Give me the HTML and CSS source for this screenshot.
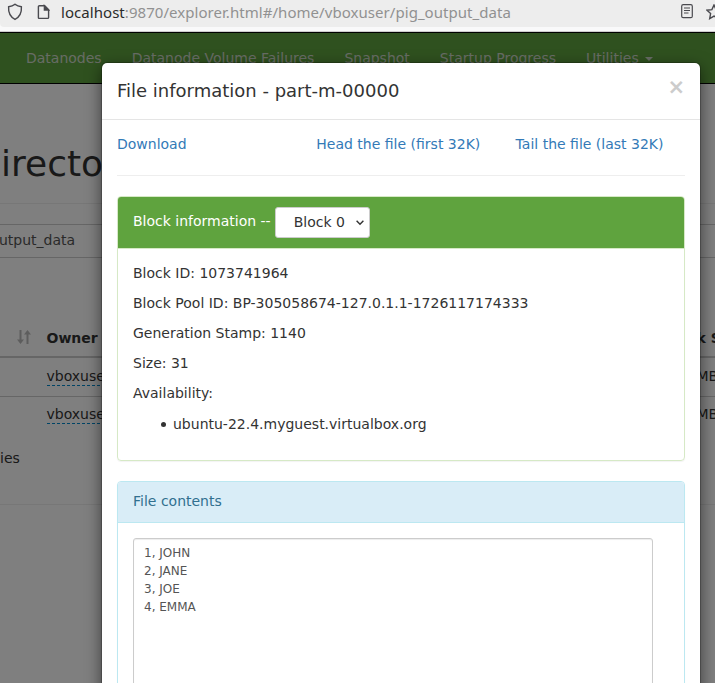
FILE: index.html
```html
<!DOCTYPE html>
<html lang="en">
<head>
<meta charset="utf-8">
<title>Browsing HDFS</title>
<link rel="stylesheet" href="styles.css">
</head>
<body>
<header class="chrome">
  <div class="address">
    <svg class="shield" width="16" height="18" viewBox="0 0 16 18"><path d="M8 1.200C6.300 2.600 3.800 3.500 1.600 3.800 1.200 9.600 3.400 14 8 16.400c4.600-2.400 6.800-6.800 6.400-12.600C12.200 3.500 9.700 2.600 8 1.200z"/></svg>
    <svg class="file" width="13" height="16" viewBox="0 0 13 16"><path d="M2.400 1.800h5.200l4 4v7.600q0 1-1 1H2.400q-1 0-1-1V2.800q0-1 1-1z"/><path class="fold" d="M7.400 1.800v4.300h4.200z"/></svg>
    <span class="url"><b>localhost</b>:9870/explorer.html#/home/vboxuser/pig_output_data</span>
    <svg class="reader" width="12" height="15" viewBox="0 0 12 15"><rect x=".7" y=".7" width="10.600" height="13" rx="1.500"/><path d="M3 4h6M3 6.500h6M3 9h4.500"/></svg>
    <svg class="star" width="16" height="16" viewBox="0 0 16 16"><path d="M8 1l2.100 4.600 4.900.6-3.600 3.400.9 5L8 12.100l-4.300 2.500.9-5L1 6.200l4.900-.6z"/></svg>
  </div>
</header>
<main class="page">
  <nav class="navbar">
    <a>Datanodes</a><a>Datanode Volume Failures</a><a>Snapshot</a><a>Startup Progress</a><a>Utilities <i class="caret"></i></a>
  </nav>
  <h1>irecto</h1>
  <div class="path">utput_data</div>
  <div class="table">
    <div class="row head"><span class="sort"><svg width="14" height="16" viewBox="0 0 14 16"><path d="M3.500 1v10M10.500 15V5"/><path class="tip" d="M0 10.500h7L3.500 15zM7 5.500h7L10.500 1z"/></svg></span><span class="owner">Owner</span><span class="size">k Size</span></div>
    <div class="row"><span class="owner"><u>vboxuse</u></span><span class="size">MB</span></div>
    <div class="row"><span class="owner"><u>vboxuse</u></span><span class="size">MB</span></div>
  </div>
  <p class="entries">ies</p>
  <hr class="rule">
</main>
<div class="backdrop">
  <section class="modal">
    <div class="modal-header"><h4>File information - part-m-00000</h4><span class="close">×</span></div>
    <div class="modal-body">
      <div class="links"><a>Download</a><a>Head the file (first 32K)</a><a>Tail the file (last 32K)</a></div>
      <div class="panel block">
        <div class="panel-heading">Block information -- <span class="select">Block 0<svg width="8" height="6" viewBox="0 0 8 6"><path d="M.6 .8L4 4.300 7.400 .8"/></svg></span></div>
        <div class="panel-body">
          <p>Block ID: 1073741964</p>
          <p>Block Pool ID: BP-305058674-127.0.1.1-1726117174333</p>
          <p>Generation Stamp: 1140</p>
          <p>Size: 31</p>
          <p>Availability:</p>
          <ul><li>ubuntu-22.4.myguest.virtualbox.org</li></ul>
        </div>
      </div>
      <div class="panel contents">
        <div class="panel-heading">File contents</div>
        <div class="panel-body"><pre class="text">1, JOHN
2, JANE
3, JOE
4, EMMA</pre></div>
      </div>
    </div>
  </section>
</div>
</body>
</html>
```
FILE: styles.css
```css
* { box-sizing: border-box; }
body {
  margin: 0;
  width: 715px;
  height: 683px;
  overflow: hidden;
  position: relative;
  font: 14px/20px "DejaVu Sans", sans-serif;
  color: #333;
  background: #fff;
}
.chrome { height: 32px; overflow: hidden; background: #f9f9fa; border-bottom: 1px solid #ccc; }
.address {
  display: flex;
  align-items: center;
  height: 27px;
  padding: 0 0 4px 7px;
  background: #ededed;
  border-bottom-left-radius: 4px;
}
.address svg { flex: none; fill: none; stroke: #4a4a4f; stroke-width: 1.4; }
.address .file { margin-left: 14px; }
.address .reader { stroke-width: 1.2; }
.address .fold { fill: #4a4a4f; }
.url {
  flex: none;
  width: 620px;
  margin-left: 11px;
  font: 15px/20px "Noto Sans", sans-serif;
  letter-spacing: .05px;
  color: #919191;
  white-space: nowrap;
}
.url b { font-weight: 400; color: #2b2b2b; }
.reader { margin-bottom: 1px; }
.star { margin-left: 13px; }

.page { height: 651px; overflow: hidden; }
.navbar {
  display: flex;
  gap: 30px;
  height: 52px;
  padding: 15px 0 0 26px;
  background: #5fa33e;
  border: solid #000;
  border-width: 1px 0;
  color: #cfd8ca;
  white-space: nowrap;
}
.caret {
  display: inline-block;
  margin-left: 2px;
  vertical-align: middle;
  border: 4px solid transparent;
  border-top-color: currentColor;
  border-bottom: 0;
}
h1 {
  height: 120px;
  margin: 0 0 20px;
  padding: 60px 0 0 1px;
  border-bottom: 1px solid #eee;
  font-size: 36px;
  line-height: 40px;
  font-weight: 400;
}
.path {
  height: 34px;
  padding-top: 5px;
  border: solid #ccc;
  border-width: 1px 0;
  color: #555;
  text-indent: -1px;
}
.table { padding-top: 69px; }
.row {
  display: flex;
  height: 38px;
  padding: 7px 0 0 46.5px;
  border-top: 1px solid #ccc;
  white-space: nowrap;
}
.head {
  height: 31px;
  padding: 1px 0 0 17px;
  border: 0;
  border-bottom: 2px solid #ccc;
  font-weight: 700;
}
.head + .row { border-top: 0; padding-top: 8px; }
.sort { flex: none; width: 29.5px; padding-top: 1px; }
.sort svg { stroke: #bbb; stroke-width: 2; }
.sort .tip { fill: #bbb; stroke: none; }
.owner { flex: none; width: 650px; }
.row u {
  padding-bottom: 1px;
  text-decoration: none;
  border-bottom: 1px dashed #0088cc;
}
.entries { margin: 14px 0 0; }
.rule { margin: 36px 0 0; border: 0; border-top: 1px solid #eee; }

.backdrop {
  position: absolute;
  inset: 32px 0 0;
  padding: 30px 14px 0 101px;
  background: rgba(0, 0, 0, .5);
  overflow: hidden;
}
.modal {
  height: 720px;
  background: #fff;
  background-clip: padding-box;
  border: 1px solid rgba(0, 0, 0, .2);
  border-radius: 6px;
  box-shadow: 0 5px 15px rgba(0, 0, 0, .5);
}
.modal-header {
  display: flex;
  justify-content: space-between;
  height: 57px;
  padding: 15px 15px 0;
  border-bottom: 1px solid #e5e5e5;
}
h4 { margin: 0; font-size: 18px; line-height: 25px; font-weight: 400; }
.close { font: 700 21px/19px "DejaVu Sans", sans-serif; color: #ccc; }
.modal-body { padding: 14px 15px; }
.links {
  display: grid;
  grid-template-columns: 199.3px 199.3px auto;
  height: 42px;
  margin-bottom: 20px;
  border-bottom: 1px solid #eee;
  color: #337ab7;
}
.panel {
  margin-bottom: 20px;
  border: 1px solid #d6e9c6;
  border-radius: 4px;
  box-shadow: 0 1px 1px rgba(0, 0, 0, .05);
}
.panel-heading {
  height: 52px;
  padding: 10px 15px;
  border-bottom: 1px solid #d6e9c6;
  border-radius: 3px 3px 0 0;
  background: #5fa33e;
  color: #fff;
}
.block .panel-heading { display: flex; gap: 4px; line-height: 28px; }
.block { height: 265px; }
.block .panel-body { padding-top: 14px; }
.select {
  display: flex;
  justify-content: space-between;
  align-items: center;
  width: 95px;
  height: 31px;
  padding: 0 5px 1px 18px;
  border: 1px solid #ccc;
  border-radius: 3px;
  background: #fff;
  color: #333;
}
.select svg { margin-top: 1px; fill: none; stroke: #333; stroke-width: 1.4; }
.panel-body { padding: 15px; }
.panel p { margin: 0 0 10px; }
.panel ul { margin: 11px 0 10px; padding: 0 0 0 28px; list-style: none; }
.panel li { display: flex; align-items: center; gap: 7px; }
.panel li::before {
  content: "";
  width: 5px;
  height: 5px;
  margin-top: 1px;
  border-radius: 50%;
  background: #333;
}
.contents { border-color: #bce8f1; height: 300px; }
.contents .panel-heading {
  height: 41px;
  background: #d9edf7;
  border-color: #bce8f1;
  color: #31708f;
  line-height: 19px;
}
.text {
  width: 520px;
  height: 240px;
  margin: 0;
  padding: 5px 10px;
  border: 1px solid #ccc;
  border-radius: 3px;
  box-shadow: inset 0 1px 1px rgba(0, 0, 0, .075);
  font: 12px/18px "DejaVu Sans", sans-serif;
  color: #555;
}
```
